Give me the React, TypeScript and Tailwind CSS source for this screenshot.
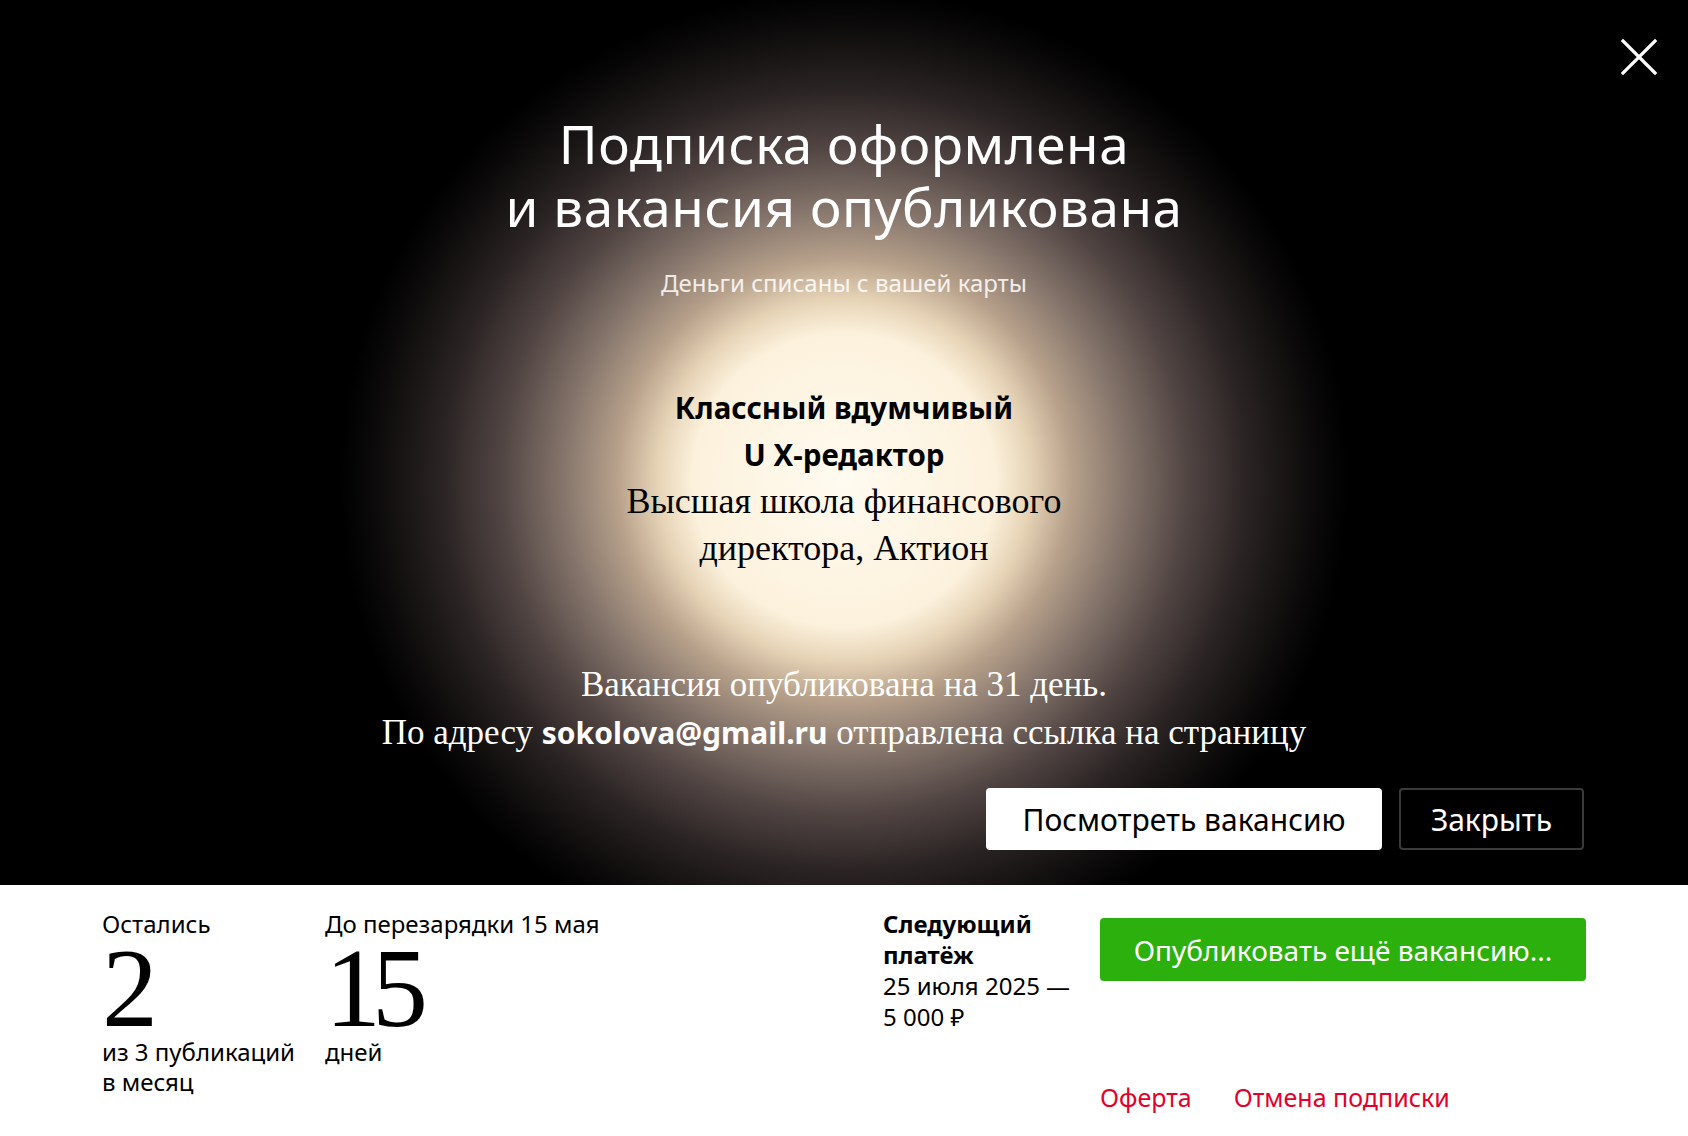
import React from 'react';

const sans = "font-['Noto_Sans',sans-serif]";
const serif = "font-['Liberation_Serif',serif]";

const CloseIcon: React.FC = () => (
	<svg width="36" height="36" viewBox="0 0 36 36" fill="none">
		<path d="M2 2L34 34M34 2L2 34" stroke="white" strokeWidth="3.2" strokeLinecap="square" />
	</svg>
);

const App: React.FC = () => {
	return (
		<div className={`w-[1688px] h-[1136px] flex flex-col bg-white ${sans}`}>
			{/* Success panel */}
			<section className="relative h-[885px] shrink-0 bg-black bg-[radial-gradient(ellipse_505px_490px_at_844px_480px,#fffbf0_0%,#fcf1dc_30%,#e6d3b6_37%,#b7a18b_45%,#83736a_56%,#514543_68%,#2a2323_80%,#0c0a0a_93%,#000_100%)] flex flex-col items-center pt-[112px]">
				<button className="absolute top-[39px] right-[31px]">
					<CloseIcon />
				</button>

				<h1 className="text-[53px] leading-[63px] text-white text-center tracking-[0.01em]">
					Подписка оформлена
					<br />
					и вакансия опубликована
				</h1>
				<p className="mt-[29px] text-[24px] leading-[32px] text-white/85 text-center">
					Деньги списаны с вашей карты
				</p>

				<div className="mt-[85px] text-center text-black">
					<p className="text-[29.5px] leading-[47px] font-bold">
						Классный вдумчивый
						<br />
						U X-редактор
					</p>
					<p className={`${serif} text-[36px] leading-[47px]`}>
						Высшая школа финансового
						<br />
						директора, Актион
					</p>
				</div>

				<div className={`mt-[89px] ${serif} text-[35px] leading-[48px] text-white text-center`}>
					<p>Вакансия опубликована на 31 день.</p>
					<p>
						По адресу <span className={`${sans} font-bold text-[30px]`}>sokolova@gmail.ru</span> отправлена
						ссылка на страницу
					</p>
				</div>

				<div className="mt-[31px] w-full flex justify-end gap-[17px] pr-[104px]">
					<button className="w-[396px] h-[62px] rounded-[4px] bg-white text-black text-[30px]">
						Посмотреть вакансию
					</button>
					<button className="w-[185px] h-[62px] rounded-[4px] border-2 border-[#3a3a3a] bg-black text-white text-[30px]">
						Закрыть
					</button>
				</div>
			</section>

			{/* Subscription summary */}
			<section className="flex-1 flex px-[102px] pt-[23px] text-black">
				<div className="w-[223px]">
					<p className="text-[24px] leading-[31px]">Остались</p>
					<p className={`${serif} text-[112px] leading-[98px]`}>2</p>
					<p className="text-[24px] leading-[30px]">
						из 3 публикаций
						<br />в месяц
					</p>
				</div>
				<div className="flex-1">
					<p className="text-[24px] leading-[31px]">До перезарядки 15 мая</p>
					<p className={`${serif} text-[112px] leading-[98px] tracking-[-9px]`}>15</p>
					<p className="text-[24px] leading-[30px]">дней</p>
				</div>
				<div className="w-[217px] pr-[20px] text-[24px] leading-[31px]">
					<p className="font-bold">Следующий платёж</p>
					<p>25 июля 2025 — 5 000 ₽</p>
				</div>
				<div className="w-[486px] flex flex-col">
					<button className="mt-[10px] h-[63px] w-full rounded-[4px] bg-[#2cb00d] text-white text-[28px]">
						Опубликовать ещё вакансию...
					</button>
					<div className="mt-[101px] flex gap-[42px] text-[25px] leading-[31px] text-[#e4002b]">
						<a href="#">Оферта</a>
						<a href="#">Отмена подписки</a>
					</div>
				</div>
			</section>
		</div>
	);
};

export default App;
